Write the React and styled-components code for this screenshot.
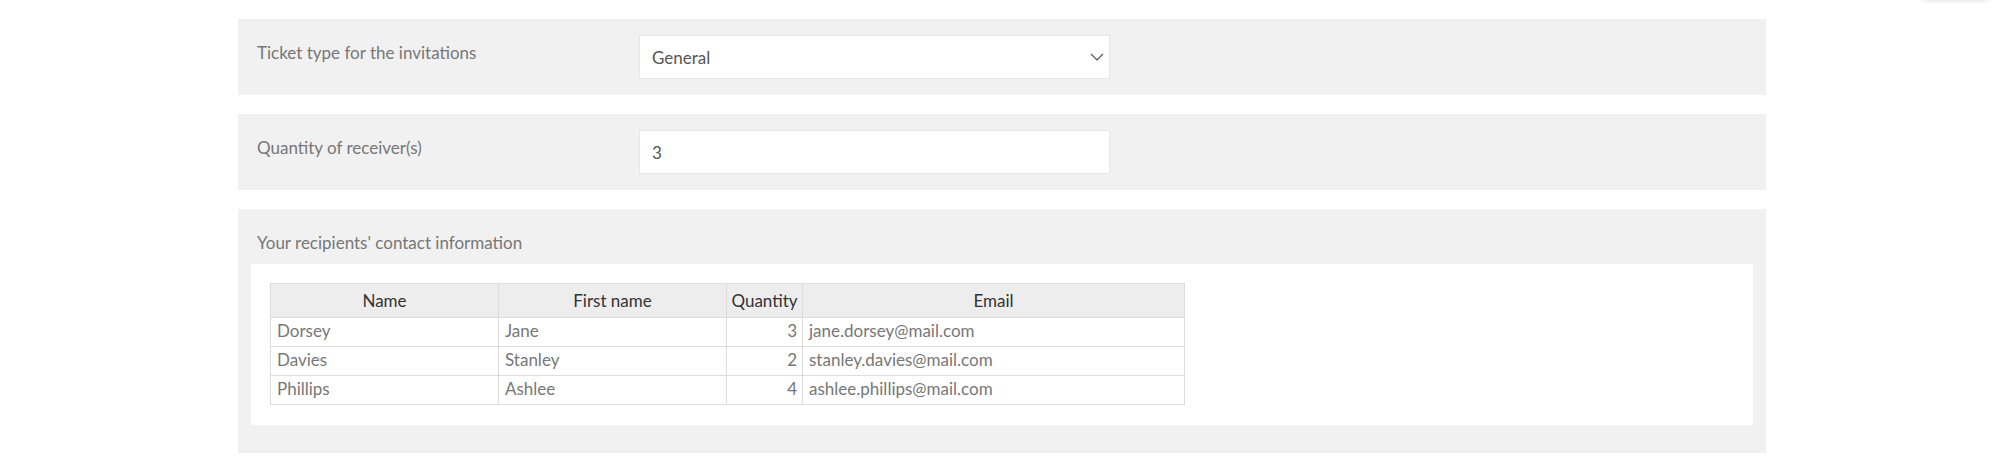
import React from "react";
import styled, { createGlobalStyle } from "styled-components";

const Global = createGlobalStyle`
  html, body { margin: 0; padding: 0; background: #fff; }
  body { font-family: Lato, "Noto Sans", sans-serif; font-size: 17px; color: #777; }
  * { box-sizing: border-box; }
`;

const Page = styled.div`
  position: relative;
  width: 2000px;
  height: 465px;
  overflow: hidden;
  padding: 19px 0 0 238px;
`;

const TopShadow = styled.div`
  position: absolute;
  top: -40px;
  left: 1923px;
  width: 65px;
  height: 40px;
  background: #fff;
  border-radius: 4px;
  box-shadow: 0 1px 5px rgba(0, 0, 0, 0.12);
`;

const Stack = styled.div`
  width: 1528px;
  display: flex;
  flex-direction: column;
  gap: 19px;
`;

const FieldPanel = styled.div`
  background: #f1f1f1;
  display: grid;
  grid-template-columns: 382px 471px;
  align-items: start;
  padding: 16px 19px;
`;

const Label = styled.div`
  padding-top: 6px;
  line-height: 24px;
  font-size: 17px;
  color: #777;
`;

const Control = styled.div`
  position: relative;
  height: 44px;
  background: #fff;
  border: 1px solid #e6e6e6;
  display: flex;
  align-items: center;
  padding: 0 12px;
  font-size: 17px;
  color: #555;
`;

const Chevron = styled.svg`
  position: absolute;
  right: 5px;
  top: 50%;
  transform: translateY(-50%);
`;

const ListPanel = styled.div`
  background: #f1f1f1;
  padding: 16px 13px 28px;
`;

const ListLabel = styled(Label)`
  padding-left: 6px;
  margin-bottom: 9px;
`;

const WhiteBox = styled.div`
  background: #fff;
  padding: 19px;
  height: 161px;
`;

const Table = styled.table`
  border-collapse: collapse;
  table-layout: fixed;
  width: 914px;
  font-size: 17px;
`;

const Th = styled.th`
  background: #ededed;
  color: #333;
  font-weight: normal;
  text-align: center;
  border: 1px solid #dcdcdc;
  padding: 7px 3px 6px;
  line-height: 20px;
  white-space: nowrap;
`;

const Td = styled.td`
  border: 1px solid #dcdcdc;
  padding: 3px 6px 5px;
  line-height: 20px;
  color: #777;
  text-align: ${(p) => (p.$num ? "right" : "left")};
  padding-right: ${(p) => (p.$num ? "5px" : "6px")};
  white-space: nowrap;
`;

const rows = [
  { name: "Dorsey", first: "Jane", qty: 3, email: "jane.dorsey@mail.com" },
  { name: "Davies", first: "Stanley", qty: 2, email: "stanley.davies@mail.com" },
  { name: "Phillips", first: "Ashlee", qty: 4, email: "ashlee.phillips@mail.com" },
];

export default function App() {
  return (
    <>
      <Global />
      <Page>
        <TopShadow />
        <Stack>
          <FieldPanel>
            <Label>Ticket type for the invitations</Label>
            <Control>
              General
              <Chevron width="14" height="8" viewBox="0 0 14 8" fill="none">
                <path d="M1 1l6 6 6-6" stroke="#555" strokeWidth="1.2" />
              </Chevron>
            </Control>
          </FieldPanel>
          <FieldPanel>
            <Label>Quantity of receiver(s)</Label>
            <Control>3</Control>
          </FieldPanel>
          <ListPanel>
            <ListLabel>Your recipients' contact information</ListLabel>
            <WhiteBox>
              <Table>
                <colgroup>
                  <col style={{ width: 228 }} />
                  <col style={{ width: 228 }} />
                  <col style={{ width: 76 }} />
                  <col style={{ width: 382 }} />
                </colgroup>
                <thead>
                  <tr>
                    <Th>Name</Th>
                    <Th>First name</Th>
                    <Th>Quantity</Th>
                    <Th>Email</Th>
                  </tr>
                </thead>
                <tbody>
                  {rows.map((r) => (
                    <tr key={r.email}>
                      <Td>{r.name}</Td>
                      <Td>{r.first}</Td>
                      <Td $num>{r.qty}</Td>
                      <Td>{r.email}</Td>
                    </tr>
                  ))}
                </tbody>
              </Table>
            </WhiteBox>
          </ListPanel>
        </Stack>
      </Page>
    </>
  );
}
